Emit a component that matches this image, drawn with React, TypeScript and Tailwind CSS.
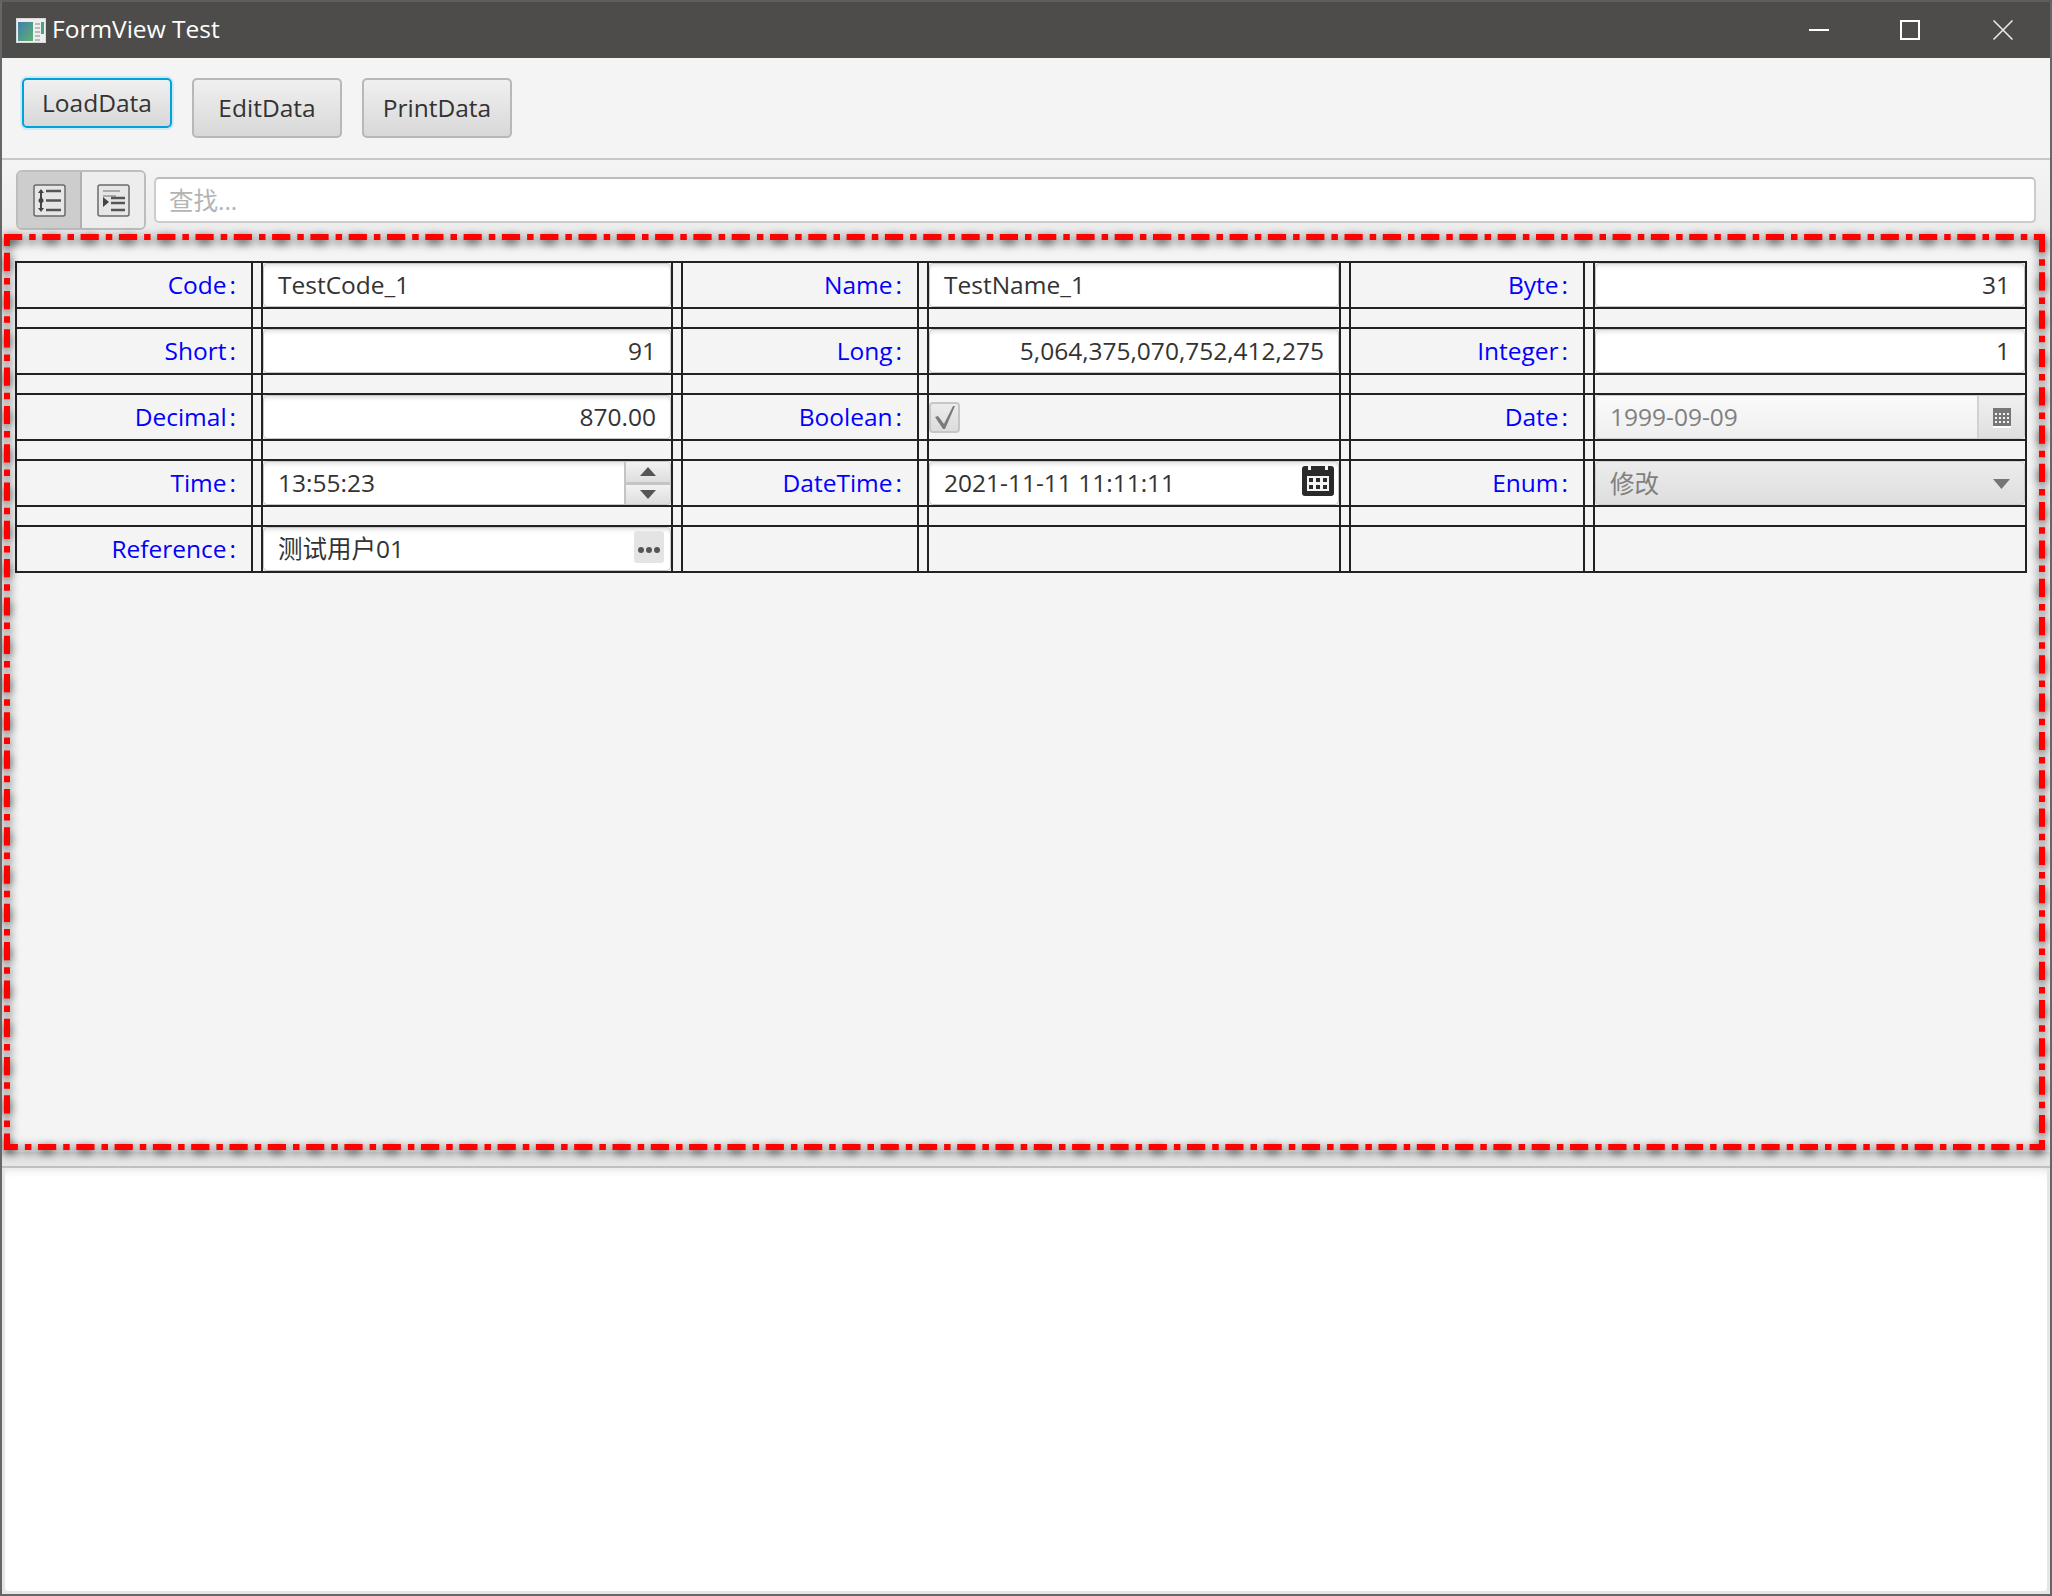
import { Fragment, type ReactNode } from 'react'

const TEXT = 'text-[24.5px] leading-none text-[#333]'

const COLS = 'grid-cols-[234px_8px_408px_8px_234px_8px_410px_8px_232px_8px_430px]'

function Field({ right, children }: { right?: boolean; children?: ReactNode }) {
  return (
    <div
      className={`relative flex h-full items-center rounded-[4px] border border-[#c8c8c8] bg-white px-[14px] shadow-[inset_0_5px_4px_-3px_rgba(0,0,0,0.12)] ${TEXT} ${right ? 'justify-end' : ''}`}
    >
      {children}
    </div>
  )
}

function SpinnerField() {
  return (
    <Field>
      13:55:23
      <div className="absolute top-0 right-0 bottom-0 flex w-[46px] flex-col gap-[3px] bg-[#c4c4c4] pl-[2px]">
        <div className="flex flex-1 items-center justify-center rounded-tr-[3px] bg-linear-to-b from-[#f2f2f2] to-[#dedede]">
          <svg width="16" height="9" viewBox="0 0 16 9"><path d="M8 0L16 9H0Z" fill="#555" /></svg>
        </div>
        <div className="flex flex-1 items-center justify-center rounded-br-[3px] bg-linear-to-b from-[#f2f2f2] to-[#dedede]">
          <svg width="16" height="9" viewBox="0 0 16 9"><path d="M0 0H16L8 9Z" fill="#555" /></svg>
        </div>
      </div>
    </Field>
  )
}

function ReferenceField() {
  return (
    <Field>
      测试用户01
      <div className="absolute top-[3px] right-[6px] flex h-[32px] w-[30px] items-center justify-center gap-[2px] rounded-[3px] bg-[#e4e4e4] pt-[5px]">
        <span className="h-[6px] w-[6px] rounded-full bg-[#555]" />
        <span className="h-[6px] w-[6px] rounded-full bg-[#555]" />
        <span className="h-[6px] w-[6px] rounded-full bg-[#555]" />
      </div>
    </Field>
  )
}

function CheckField() {
  return (
    <div className="flex h-full items-center">
      <div className="flex h-[31px] w-[31px] items-center justify-center rounded-[4px] border-2 border-[#c6c6c6] bg-linear-to-b from-[#ececec] to-[#dcdcdc]">
        <svg width="20" height="23" viewBox="0 0 20 23">
          <path d="M0 11L3 10L9 18L18 0H20L10 23H8Z" fill="#7a7a7a" />
        </svg>
      </div>
    </div>
  )
}

function DateTimeField() {
  return (
    <Field>
      2021-11-11 11:11:11
      <svg className="absolute top-[3px] right-[4px]" width="32" height="31" viewBox="0 0 32 31">
        <rect x="0" y="1" width="32" height="30" rx="3" fill="#2a2a2a" />
        <rect x="6" y="0" width="3" height="5" fill="#f4f4f4" />
        <rect x="23" y="0" width="3" height="5" fill="#f4f4f4" />
        <rect x="5" y="11" width="22" height="15" fill="#f4f4f4" />
        {[7, 14, 21].map((x) =>
          [13, 20].map((y) => <rect key={`${x}-${y}`} x={x} y={y} width="4" height="4" fill="#2a2a2a" />),
        )}
      </svg>
    </Field>
  )
}

function DateField() {
  return (
    <div className="relative flex h-full items-center rounded-[4px] border border-[#cfcfcf] bg-linear-to-b from-[#fafafa] to-[#efefef] px-[14px] text-[24.5px] leading-none text-[#808080]">
      1999-09-09
      <div className="absolute top-0 right-0 bottom-0 flex w-[47px] items-center justify-center border-l-2 border-[#d2d2d2] bg-linear-to-b from-[#f0f0f0] to-[#dfdfdf] pt-[2px]">
        <svg width="18" height="20" viewBox="0 0 18 20">
          <rect width="18" height="18" fill="#777" />
          <rect y="18" width="18" height="2" fill="#fff" />
          {[2, 6, 10, 14].map((x) =>
            [5, 9, 13].map((y) => <rect key={`${x}-${y}`} x={x} y={y} width="2" height="2" fill="#f4f4f4" />),
          )}
        </svg>
      </div>
    </div>
  )
}

function EnumField() {
  return (
    <div className="relative flex h-full items-center rounded-[4px] border border-[#cfcfcf] bg-linear-to-b from-[#ececec] to-[#dedede] px-[14px] pt-[2px] text-[24.5px] leading-none text-[#808080]">
      修改
      <svg className="absolute top-[17px] right-[14px]" width="17" height="10" viewBox="0 0 17 10">
        <path d="M0 0H17L8.5 10Z" fill="#757575" />
      </svg>
    </div>
  )
}

const FORM_ROWS: { label: string; field: ReactNode }[][] = [
  [
    { label: 'Code', field: <Field>TestCode_1</Field> },
    { label: 'Name', field: <Field>TestName_1</Field> },
    { label: 'Byte', field: <Field right>31</Field> },
  ],
  [
    { label: 'Short', field: <Field right>91</Field> },
    { label: 'Long', field: <Field right>5,064,375,070,752,412,275</Field> },
    { label: 'Integer', field: <Field right>1</Field> },
  ],
  [
    { label: 'Decimal', field: <Field right>870.00</Field> },
    { label: 'Boolean', field: <CheckField /> },
    { label: 'Date', field: <DateField /> },
  ],
  [
    { label: 'Time', field: <SpinnerField /> },
    { label: 'DateTime', field: <DateTimeField /> },
    { label: 'Enum', field: <EnumField /> },
  ],
  [
    { label: 'Reference', field: <ReferenceField /> },
    { label: '', field: null },
    { label: '', field: null },
  ],
]

function FormGrid() {
  return (
    <div className={`grid w-fit gap-[2px] bg-[#222] p-[2px] ${COLS}`}>
      {FORM_ROWS.map((row, r) => (
        <Fragment key={r}>
          {r > 0 && Array.from({ length: 11 }, (_, i) => <div key={i} className="h-[18px] bg-[#f4f4f4]" />)}
          {row.map((cell, c) => (
            <Fragment key={c}>
              {c > 0 && <div className="bg-[#f4f4f4]" />}
              <div className="flex h-[44px] items-center justify-end bg-[#f4f4f4] pr-[15px] text-[24.5px] leading-none text-[#0000ff]">
                {cell.label}
                {cell.label && <span className="ml-[3px]">:</span>}
              </div>
              <div className="bg-[#f4f4f4]" />
              <div className="h-[44px] bg-[#f4f4f4]">{cell.field}</div>
            </Fragment>
          ))}
        </Fragment>
      ))}
    </div>
  )
}

function ToolButton({ label, focused }: { label: string; focused?: boolean }) {
  return (
    <button
      className={`flex w-[150px] items-center justify-center rounded-[5px] border-2 bg-linear-to-b from-[#f0f0f0] to-[#d8d8d8] text-[24.5px] leading-none text-[#333] ${
        focused ? 'h-[50px] border-[#00a3d9] shadow-[0_0_0_2px_#cfeaf6]' : 'h-[60px] border-[#b8b8b8]'
      }`}
    >
      {label}
    </button>
  )
}

function TreeIcon() {
  return (
    <svg width="33" height="33" viewBox="0 0 33 33">
      <rect x="1" y="1" width="31" height="31" rx="2" fill="#e6e6e6" stroke="#6a6a6a" strokeWidth="1.5" />
      <path d="M8 5L11 9H5ZM8 28L11 24H5ZM7 9H9V24H7Z" fill="#444" />
      <circle cx="8" cy="16.5" r="2.5" fill="#444" />
      <path d="M13 7H28M13 16.5H28M13 26H28" stroke="#555" strokeWidth="2.5" />
    </svg>
  )
}

function OutlineIcon() {
  return (
    <svg width="33" height="33" viewBox="0 0 33 33">
      <rect x="1" y="1" width="31" height="31" rx="2" fill="#e6e6e6" stroke="#6a6a6a" strokeWidth="1.5" />
      <path d="M6 7H23M6 12H19" stroke="#aaa" strokeWidth="2" />
      <path d="M6 13V23L12 18Z" fill="#444" />
      <path d="M14 14H28M14 19H28M14 26H28" stroke="#555" strokeWidth="2.5" />
    </svg>
  )
}

function AppIcon() {
  return (
    <svg width="30" height="25" viewBox="0 0 30 25">
      <defs>
        <linearGradient id="pane" x1="0" y1="0" x2="1" y2="1">
          <stop offset="0" stopColor="#3f7fb0" />
          <stop offset="1" stopColor="#5fb070" />
        </linearGradient>
      </defs>
      <rect width="30" height="25" fill="#d8d8d8" />
      <rect x="1" y="1" width="28" height="23" fill="#eeeeee" />
      <rect x="2" y="4" width="15" height="19" fill="url(#pane)" />
      <path d="M19 6H24M19 10H24M19 14H24M19 18H24M19 22H24" stroke="#aaa" strokeWidth="1.5" />
      <rect x="25" y="4" width="3" height="12" fill="#4f9f88" />
    </svg>
  )
}

export default function App() {
  return (
    <div className="flex h-[1596px] w-[2052px] flex-col overflow-hidden border-2 border-t-[#5e5e5e] border-r-[#666] border-b-[#666] border-l-[#666] bg-[#f4f4f4] [font-family:'Open_Sans','Noto_Sans_CJK_SC',sans-serif]">
      {/* title bar */}
      <div className="flex h-[56px] shrink-0 items-center bg-[#4d4c4a] pl-[14px] text-white">
        <AppIcon />
        <span className="mb-[2px] ml-[6px] text-[24.5px] leading-none">FormView Test</span>
        <div className="ml-auto flex h-full items-center">
          <svg className="mr-[71px]" width="20" height="2" viewBox="0 0 20 2"><rect width="20" height="2" fill="#fff" /></svg>
          <svg className="mr-[73px]" width="20" height="20" viewBox="0 0 20 20"><rect x="1" y="1" width="18" height="18" fill="none" stroke="#fff" strokeWidth="2" /></svg>
          <svg className="mr-[37px]" width="20" height="20" viewBox="0 0 20 20"><path d="M0.5 0.5L19.5 19.5M19.5 0.5L0.5 19.5" stroke="#eee" strokeWidth="1.5" /></svg>
        </div>
      </div>

      {/* action buttons */}
      <div className="flex h-[100px] shrink-0 items-start gap-[20px] pt-[20px] pl-[20px]">
        <ToolButton label="LoadData" focused />
        <ToolButton label="EditData" />
        <ToolButton label="PrintData" />
      </div>

      {/* mode toggle and search */}
      <div className="flex h-[76px] shrink-0 items-start gap-[8px] border-t-2 border-[#c8c8c8] bg-linear-to-b from-[#f4f4f4] to-[#ececec] pt-[10px] pr-[14px] pl-[14px]">
        <div className="flex h-[60px] w-[130px] shrink-0 overflow-hidden rounded-[6px] border-2 border-[#bdbdbd]">
          <div className="flex w-[64px] items-center justify-center border-r-2 border-[#b0b0b0] bg-[#cdcdcd]">
            <TreeIcon />
          </div>
          <div className="flex flex-1 items-center justify-center bg-[#ededed]">
            <OutlineIcon />
          </div>
        </div>
        <div className="mt-[7px] flex h-[46px] flex-1 items-center rounded-[5px] border-2 border-t-[#bcbcbc] border-r-[#cccccc] border-b-[#cccccc] border-l-[#cccccc] bg-white px-[13px] pt-[2px] text-[24.5px] leading-none text-[#b4b4b4]">
          查找...
        </div>
      </div>

      {/* form panel */}
      <div className="relative h-[918px] shrink-0 pt-[27px] pl-[13px]">
        <FormGrid />
        <svg className="pointer-events-none absolute top-0 left-0 drop-shadow-[0_3px_5px_rgba(0,0,0,0.9)]" width="2048" height="930" viewBox="0 0 2048 930">
          <g fill="none" stroke="#ff0000" strokeWidth="6" strokeDasharray="18.2 7 6.5 6.6">
            <path d="M2 3H2043" />
            <path d="M2040 0V916" />
            <path d="M2 913H2043" strokeDashoffset="4.3" />
            <path d="M5 0V916" strokeDashoffset="19.6" />
          </g>
        </svg>
      </div>

      <div className="h-[16px] shrink-0 border-b-2 border-[#c0c0c0] bg-[#e6e6e6]" />

      {/* detail area */}
      <div className="flex-1 bg-[#e6e6e6] px-[3px] pb-[3px]">
        <div className="h-full rounded-[3px] bg-white shadow-[inset_0_8px_8px_-6px_rgba(0,0,0,0.12)]" />
      </div>
    </div>
  )
}
